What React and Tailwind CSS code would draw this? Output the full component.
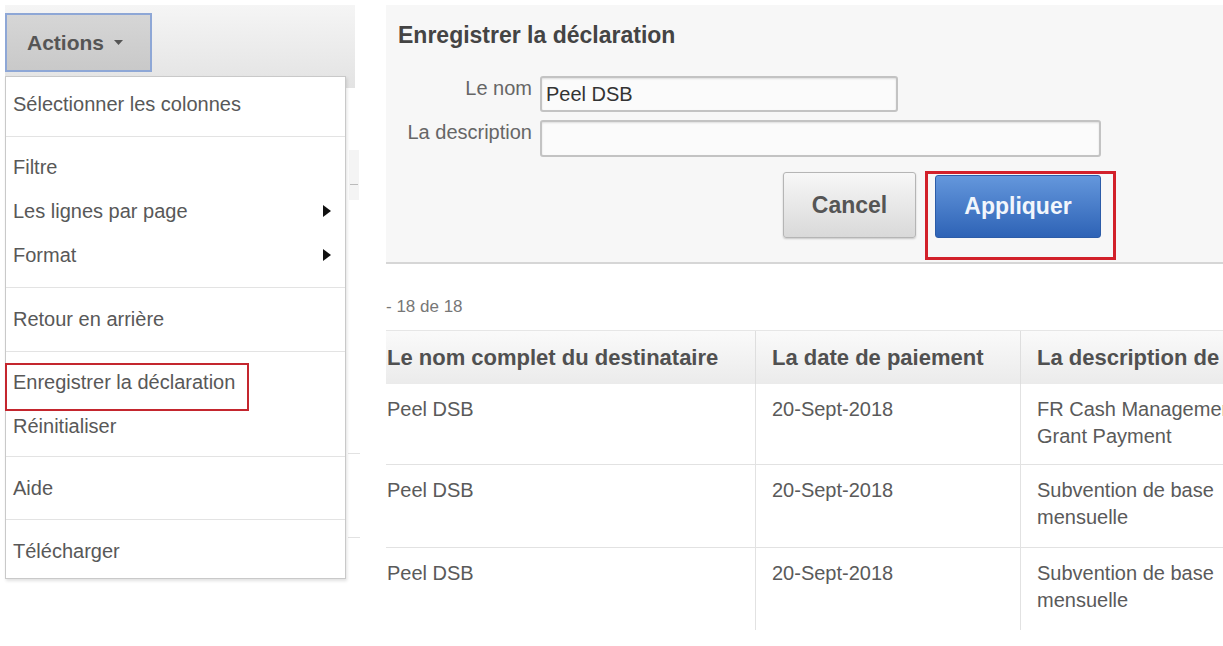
import React from 'react';

const font = "font-['Liberation_Sans',Arial,Helvetica,sans-serif]";

const groups = [
  { pt: 'pt-[5px]', pb: 'pb-[10px]', items: [{ label: 'Sélectionner les colonnes' }] },
  {
    pt: 'pt-[8px]',
    pb: 'pb-[10px]',
    items: [{ label: 'Filtre' }, { label: 'Les lignes par page', sub: true }, { label: 'Format', sub: true }],
  },
  { pt: 'pt-[9px]', pb: 'pb-[10px]', items: [{ label: 'Retour en arrière' }] },
  {
    pt: 'pt-[8px]',
    pb: 'pb-[8px]',
    items: [{ label: 'Enregistrer la déclaration', marked: true }, { label: 'Réinitialiser' }],
  },
  { pt: 'pt-[9px]', pb: 'pb-[9px]', items: [{ label: 'Aide' }] },
  { pt: 'pt-[9px]', pb: 'pb-[5px]', items: [{ label: 'Télécharger' }] },
];

const rows = [
  { name: 'Peel DSB', date: '20-Sept-2018', desc: ['FR Cash Management', 'Grant Payment'], h: 'h-[81px]' },
  { name: 'Peel DSB', date: '20-Sept-2018', desc: ['Subvention de base', 'mensuelle'], h: 'h-[83px]' },
  { name: 'Peel DSB', date: '20-Sept-2018', desc: ['Subvention de base', 'mensuelle'], h: 'h-[82px]' },
];

function SubArrow() {
  return (
    <svg width="8" height="12" viewBox="0 0 8 12" className="absolute right-[14px]">
      <polygon points="0,0 8,6 0,12" fill="#111" />
    </svg>
  );
}

function ActionsMenu() {
  return (
    <div className="absolute left-[5px] top-[76px] w-[341px] h-[503px] bg-white border border-[#c9c9c9] shadow-[1px_2px_3px_rgba(0,0,0,0.12)]">
      {groups.map((g, gi) => (
        <div key={gi} className={`${g.pt} ${g.pb} ${gi < groups.length - 1 ? 'border-b border-[#e3e3e3]' : ''}`}>
          {g.items.map((it) => (
            <div key={it.label} className="relative h-[44px] flex items-center pl-[7px] text-[20px] text-[#585858]">
              <span>{it.label}</span>
              {it.sub && <SubArrow />}
              {it.marked && (
                <span className="absolute left-[-1px] top-[3px] w-[244px] h-[48px] border-2 border-[#c4262e]" />
              )}
            </div>
          ))}
        </div>
      ))}
    </div>
  );
}

export default function App() {
  return (
    <div className={`w-[1223px] h-[646px] overflow-hidden bg-white flex ${font}`}>
      {/* Left: toolbar + open Actions menu */}
      <div className="relative w-[386px] shrink-0">
        <div className="ml-[5px] mt-[5px] w-[350px] h-[83px] bg-linear-to-b from-[#f5f5f5] to-[#e3e3e3] pt-[8px]">
          <button className="w-[147px] h-[59px] border-2 border-[#8ea7d6] bg-linear-to-b from-[#d6d6d6] to-[#c9c9c9] flex items-center pl-[20px] gap-[10px] text-[21px] font-bold text-[#555]">
            <span>Actions</span>
            <svg width="9" height="5" viewBox="0 0 9 5">
              <polygon points="0,0 9,0 4.5,5" fill="#555" />
            </svg>
          </button>
        </div>
        <div className="absolute left-[349px] top-[150px] w-[10px] h-[50px] bg-[#f4f4f4]" />
        <div className="absolute left-[350px] top-[184px] w-[8px] h-px bg-[#bbb]" />
        <div className="absolute left-[348px] top-[453px] w-[12px] h-px bg-[#e2e2e2]" />
        <div className="absolute left-[348px] top-[537px] w-[12px] h-px bg-[#e2e2e2]" />
        <ActionsMenu />
      </div>

      {/* Right: save dialog + table */}
      <div className="flex-1 min-w-0">
        <div className="mt-[5px] h-[259px] bg-[#f7f7f7] border-b-2 border-[#d6d6d6] px-[12px] pt-[16px]">
          <h2 className="text-[23px] leading-[28px] font-bold text-[#444]">Enregistrer la déclaration</h2>

          <div className="mt-[27px] flex items-start">
            <label className="w-[134px] mr-[8px] text-right text-[20px] leading-[24px] text-[#666]">Le nom</label>
            <div className="w-[358px] h-[36px] border-2 border-[#c3c3c3] rounded-[3px] bg-[#fbfbfb] shadow-[inset_0_1px_2px_rgba(0,0,0,0.12)] flex items-center px-[4px] text-[20px] text-[#333]">
              Peel DSB
            </div>
          </div>
          <div className="mt-[8px] flex items-start">
            <label className="w-[134px] mr-[8px] text-right text-[20px] leading-[24px] text-[#666] whitespace-nowrap">La description</label>
            <div className="w-[561px] h-[37px] border-2 border-[#c3c3c3] rounded-[3px] bg-[#fbfbfb] shadow-[inset_0_1px_2px_rgba(0,0,0,0.12)]" />
          </div>

          <div className="mt-[15px] ml-[142px] w-[561px] flex justify-end items-end gap-[19px]">
            <button className="w-[133px] h-[66px] rounded-[3px] border border-[#b5b5b5] bg-linear-to-b from-[#f7f7f7] to-[#d9d9d9] shadow-[0_1px_2px_rgba(0,0,0,0.2)] text-[23px] font-bold text-[#555]">
              Cancel
            </button>
            <div className="relative">
              <button className="w-[166px] h-[63px] rounded-[3px] border border-[#2c5ca8] bg-linear-to-b from-[#6497dc] to-[#2e63b6] text-[23px] font-bold text-[#f2f6fc]">
                Appliquer
              </button>
              <span className="absolute left-[-10px] top-[-4px] w-[191px] h-[89px] border-[3px] border-[#d2202a]" />
            </div>
          </div>
        </div>

        <div className="mt-[33px] text-[17px] leading-[20px] text-[#777]">- 18 de 18</div>

        <div className="mt-[13px] w-[934px]">
          <div className="flex h-[54px] bg-linear-to-b from-[#fafafa] to-[#ebebeb] border-t border-[#e6e6e6] text-[22px] font-bold text-[#505050]">
            <div className="w-[369px] flex items-center pl-px whitespace-nowrap">Le nom complet du destinataire</div>
            <div className="w-[265px] flex items-center pl-[16px] border-l border-[#dedede] whitespace-nowrap">La date de paiement</div>
            <div className="w-[300px] flex items-center pl-[16px] border-l border-[#dedede] whitespace-nowrap">La description de</div>
          </div>
          {rows.map((r, i) => (
            <div
              key={i}
              className={`flex ${r.h} text-[20px] leading-[27px] text-[#5a5a5a] ${i < rows.length - 1 ? 'border-b border-[#e2e2e2]' : ''}`}
            >
              <div className="w-[369px] pt-[12px] pl-px">{r.name}</div>
              <div className="w-[265px] pt-[12px] pl-[16px] border-l border-[#e2e2e2]">{r.date}</div>
              <div className="w-[300px] pt-[12px] pl-[16px] border-l border-[#e2e2e2] whitespace-nowrap">
                {r.desc[0]}
                <br />
                {r.desc[1]}
              </div>
            </div>
          ))}
        </div>
      </div>
    </div>
  );
}
